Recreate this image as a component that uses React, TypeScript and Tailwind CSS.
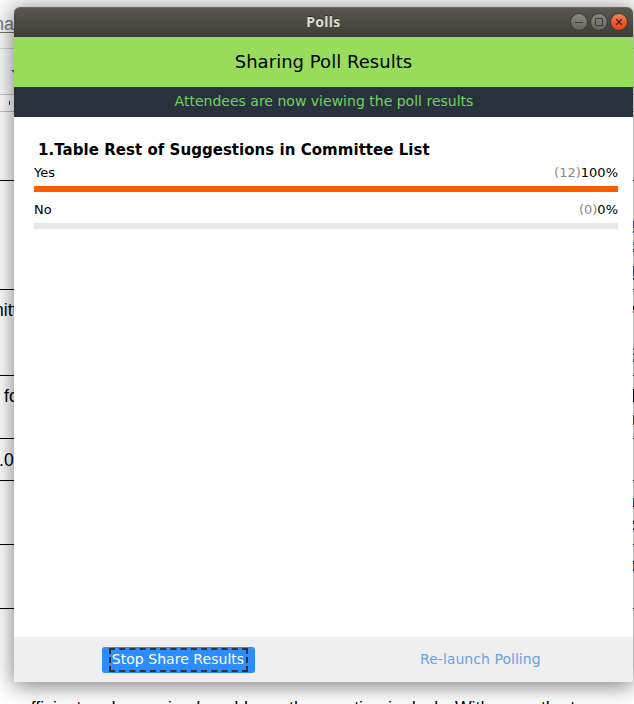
import React from "react";

type Mark = { top: number; height: number; color: string };
type Row = { h: string; text: string; pad: string; marks: Mark[] };

const rows: Row[] = [
  { h: "h-[69px]", text: "", pad: "", marks: [] },
  {
    h: "h-[109px]",
    text: "",
    pad: "",
    marks: [
      { top: 40, height: 7, color: "#6a5a9a" },
      { top: 3, height: 2, color: "#3050b0" },
      { top: 9, height: 3, color: "#4a90b8" },
      { top: 4, height: 3, color: "#3a60a0" },
      { top: 14, height: 10, color: "#4058c0" },
      { top: 2, height: 2, color: "#202880" },
    ],
  },
  {
    h: "h-[86px]",
    text: "nitte",
    pad: "-ml-[6px] pt-[10px]",
    marks: [
      { top: 16, height: 4, color: "#181020" },
      { top: 1, height: 2, color: "#c08040" },
      { top: 35, height: 2, color: "#4050b0" },
      { top: 3, height: 2, color: "#4050b0" },
      { top: 4, height: 3, color: "#304890" },
    ],
  },
  {
    h: "h-[63px]",
    text: "for",
    pad: "ml-1 pt-[10px]",
    marks: [
      { top: 13, height: 13, color: "#060638" },
      { top: 13, height: 10, color: "#8a4a18" },
    ],
  },
  { h: "h-[42px]", text: ".00", pad: "-ml-px pt-[11px]", marks: [] },
  {
    h: "h-[64px]",
    text: "",
    pad: "",
    marks: [
      { top: 17, height: 7, color: "#2868b0" },
      { top: 0, height: 2, color: "#201040" },
      { top: 14, height: 3, color: "#302030" },
      { top: 4, height: 2, color: "#403060" },
    ],
  },
  {
    h: "h-[64px]",
    text: "",
    pad: "",
    marks: [
      { top: 16, height: 3, color: "#302040" },
      { top: 0, height: 5, color: "#d08838" },
      { top: 0, height: 2, color: "#283890" },
    ],
  },
];

function Backdrop() {
  return (
    <div className="flex h-full flex-col overflow-hidden bg-white text-[17.6px] text-black">
      <div className="flex h-[49px] shrink-0 items-center border-b border-[#d2d2d2] bg-[#fafafa]">
        <span className="-ml-[6px] text-[18px] leading-5 text-[#777] underline decoration-1 underline-offset-2">na</span>
      </div>
      <div className="flex h-[46px] shrink-0 items-center border-b border-[#c8c8c8] bg-[#fafafa] pl-[11px]">
        <span className="border-x-4 border-t-4 border-x-transparent border-t-[#666]" />
      </div>
      <div className="flex h-[17px] shrink-0 items-center border-b border-[#c4c4c4] bg-white pl-[9px]">
        <span className="h-1 w-px bg-[#333]" />
      </div>
      {rows.map((row, i) => (
        <div key={i} className={`${row.h} flex shrink-0 justify-between border-b border-black leading-5`}>
          <div className={row.pad}>{row.text}</div>
          <div className="w-px">
            {row.marks.map((mark, j) => (
              <div key={j} style={{ paddingTop: mark.top }}>
                <div style={{ height: mark.height, background: mark.color }} />
              </div>
            ))}
          </div>
        </div>
      ))}
      <div className="flex shrink-0 pt-[89px] pl-[21px] leading-5 whitespace-pre">
        <span className="w-[102px]">efficient and </span>
        <span className="w-[86px]">organized </span>
        <span className="w-[35px]">and </span>
        <span className="w-[45px]">keep </span>
        <span className="w-[31px]">the </span>
        <span className="w-[68px]">meeting </span>
        <span className="w-[18px]">in </span>
        <span className="w-[49px]">deck. </span>
        <span className="w-[37px]">With </span>
        <span>a month at</span>
      </div>
    </div>
  );
}

function TitleBar() {
  return (
    <header className="grid h-[30px] shrink-0 grid-cols-[1fr_auto_1fr] items-center rounded-t-[6px] border-t border-[#6a675e] bg-linear-to-b from-[#5a574e] to-[#3e3d38] font-['Noto_Sans',sans-serif]">
      <span />
      <h1 className="-mt-[2px] text-[14px] leading-[28px] font-bold tracking-[0.3px] text-[#dfdbd2] [text-shadow:0_-1px_0_#2b2a27]">Polls</h1>
      <svg className="-mt-px mr-[4px] justify-self-end" width="60" height="20" viewBox="0 0 60 20" fill="none">
        <defs>
          <linearGradient id="grey" x2="0" y2="1">
            <stop stopColor="#8b8982" />
            <stop offset="1" stopColor="#65635c" />
          </linearGradient>
          <linearGradient id="orange" x2="0" y2="1">
            <stop stopColor="#f58462" />
            <stop offset="0.55" stopColor="#eb5728" />
            <stop offset="1" stopColor="#df4b1c" />
          </linearGradient>
        </defs>
        <circle cx="10" cy="10" r="8.5" fill="url(#grey)" stroke="#373632" />
        <path d="M6 10.5h8" stroke="#3c3b37" />
        <circle cx="30" cy="10" r="8.5" fill="url(#grey)" stroke="#373632" />
        <path d="M26.5 6.5h7v7h-7z" stroke="#3c3b37" />
        <circle cx="50" cy="10" r="8.5" fill="url(#orange)" stroke="#373632" />
        <path d="m47.3 7.3 5.4 5.4m0-5.4-5.4 5.4" stroke="#4a2a1c" strokeWidth="1.5" />
      </svg>
    </header>
  );
}

function Option({ label, votes, percent }: { label: string; votes: number; percent: number }) {
  return (
    <div className="mb-2">
      <div className="flex h-[23px] justify-between text-[13px] leading-5">
        <span>{label}</span>
        <span>
          <span className="text-[#888]">({votes})</span>
          {percent}%
        </span>
      </div>
      <div className="h-1.5 bg-[#e8e8e8]">
        <div className="h-full bg-[#ff5b00]" style={{ width: `${percent}%` }} />
      </div>
    </div>
  );
}

export default function App() {
  return (
    <div className="relative h-[704px] w-[634px] overflow-hidden font-['Liberation_Sans',sans-serif]">
      <Backdrop />
      <main className="absolute top-[7px] left-[14px] flex h-[675px] w-[619px] flex-col rounded-t-[6px] bg-white font-['DejaVu_Sans',sans-serif] text-black shadow-[0_3px_22px_rgba(0,0,0,0.55)]">
        <TitleBar />
        <h2 className="h-[50px] bg-[#98dc5c] text-center text-[18px] leading-[50px] tracking-[0.04px]">Sharing Poll Results</h2>
        <p className="h-[30px] bg-[#28323c] pl-px text-center text-[14px] leading-[29px] tracking-[0.01px] text-[#6fd35d]">
          Attendees are now viewing the poll results
        </p>
        <section className="flex-1 pt-[23px] pr-[15px] pl-5">
          <h3 className="mb-[3px] pl-1 text-[15px] leading-5 font-bold tracking-[0.04px]">1.Table Rest of Suggestions in Committee List</h3>
          <Option label="Yes" votes={12} percent={100} />
          <Option label="No" votes={0} percent={0} />
        </section>
        <footer className="flex h-[45px] items-center bg-[#efefef] text-[14px]">
          <button className="ml-[88px] flex h-[26px] w-[153px] items-center justify-center rounded-[3px] bg-[#2d8cff] text-white">
            <span className="-ml-px flex h-6 w-[139px] items-center justify-center border-2 border-dashed border-[#333] pb-[2px] leading-[18px] tracking-[0.04px] whitespace-nowrap">
              Stop Share Results
            </span>
          </button>
          <button className="ml-[165px] pb-[2px] leading-5 tracking-[0.04px] text-[#66a3e6]">Re-launch Polling</button>
        </footer>
      </main>
    </div>
  );
}
